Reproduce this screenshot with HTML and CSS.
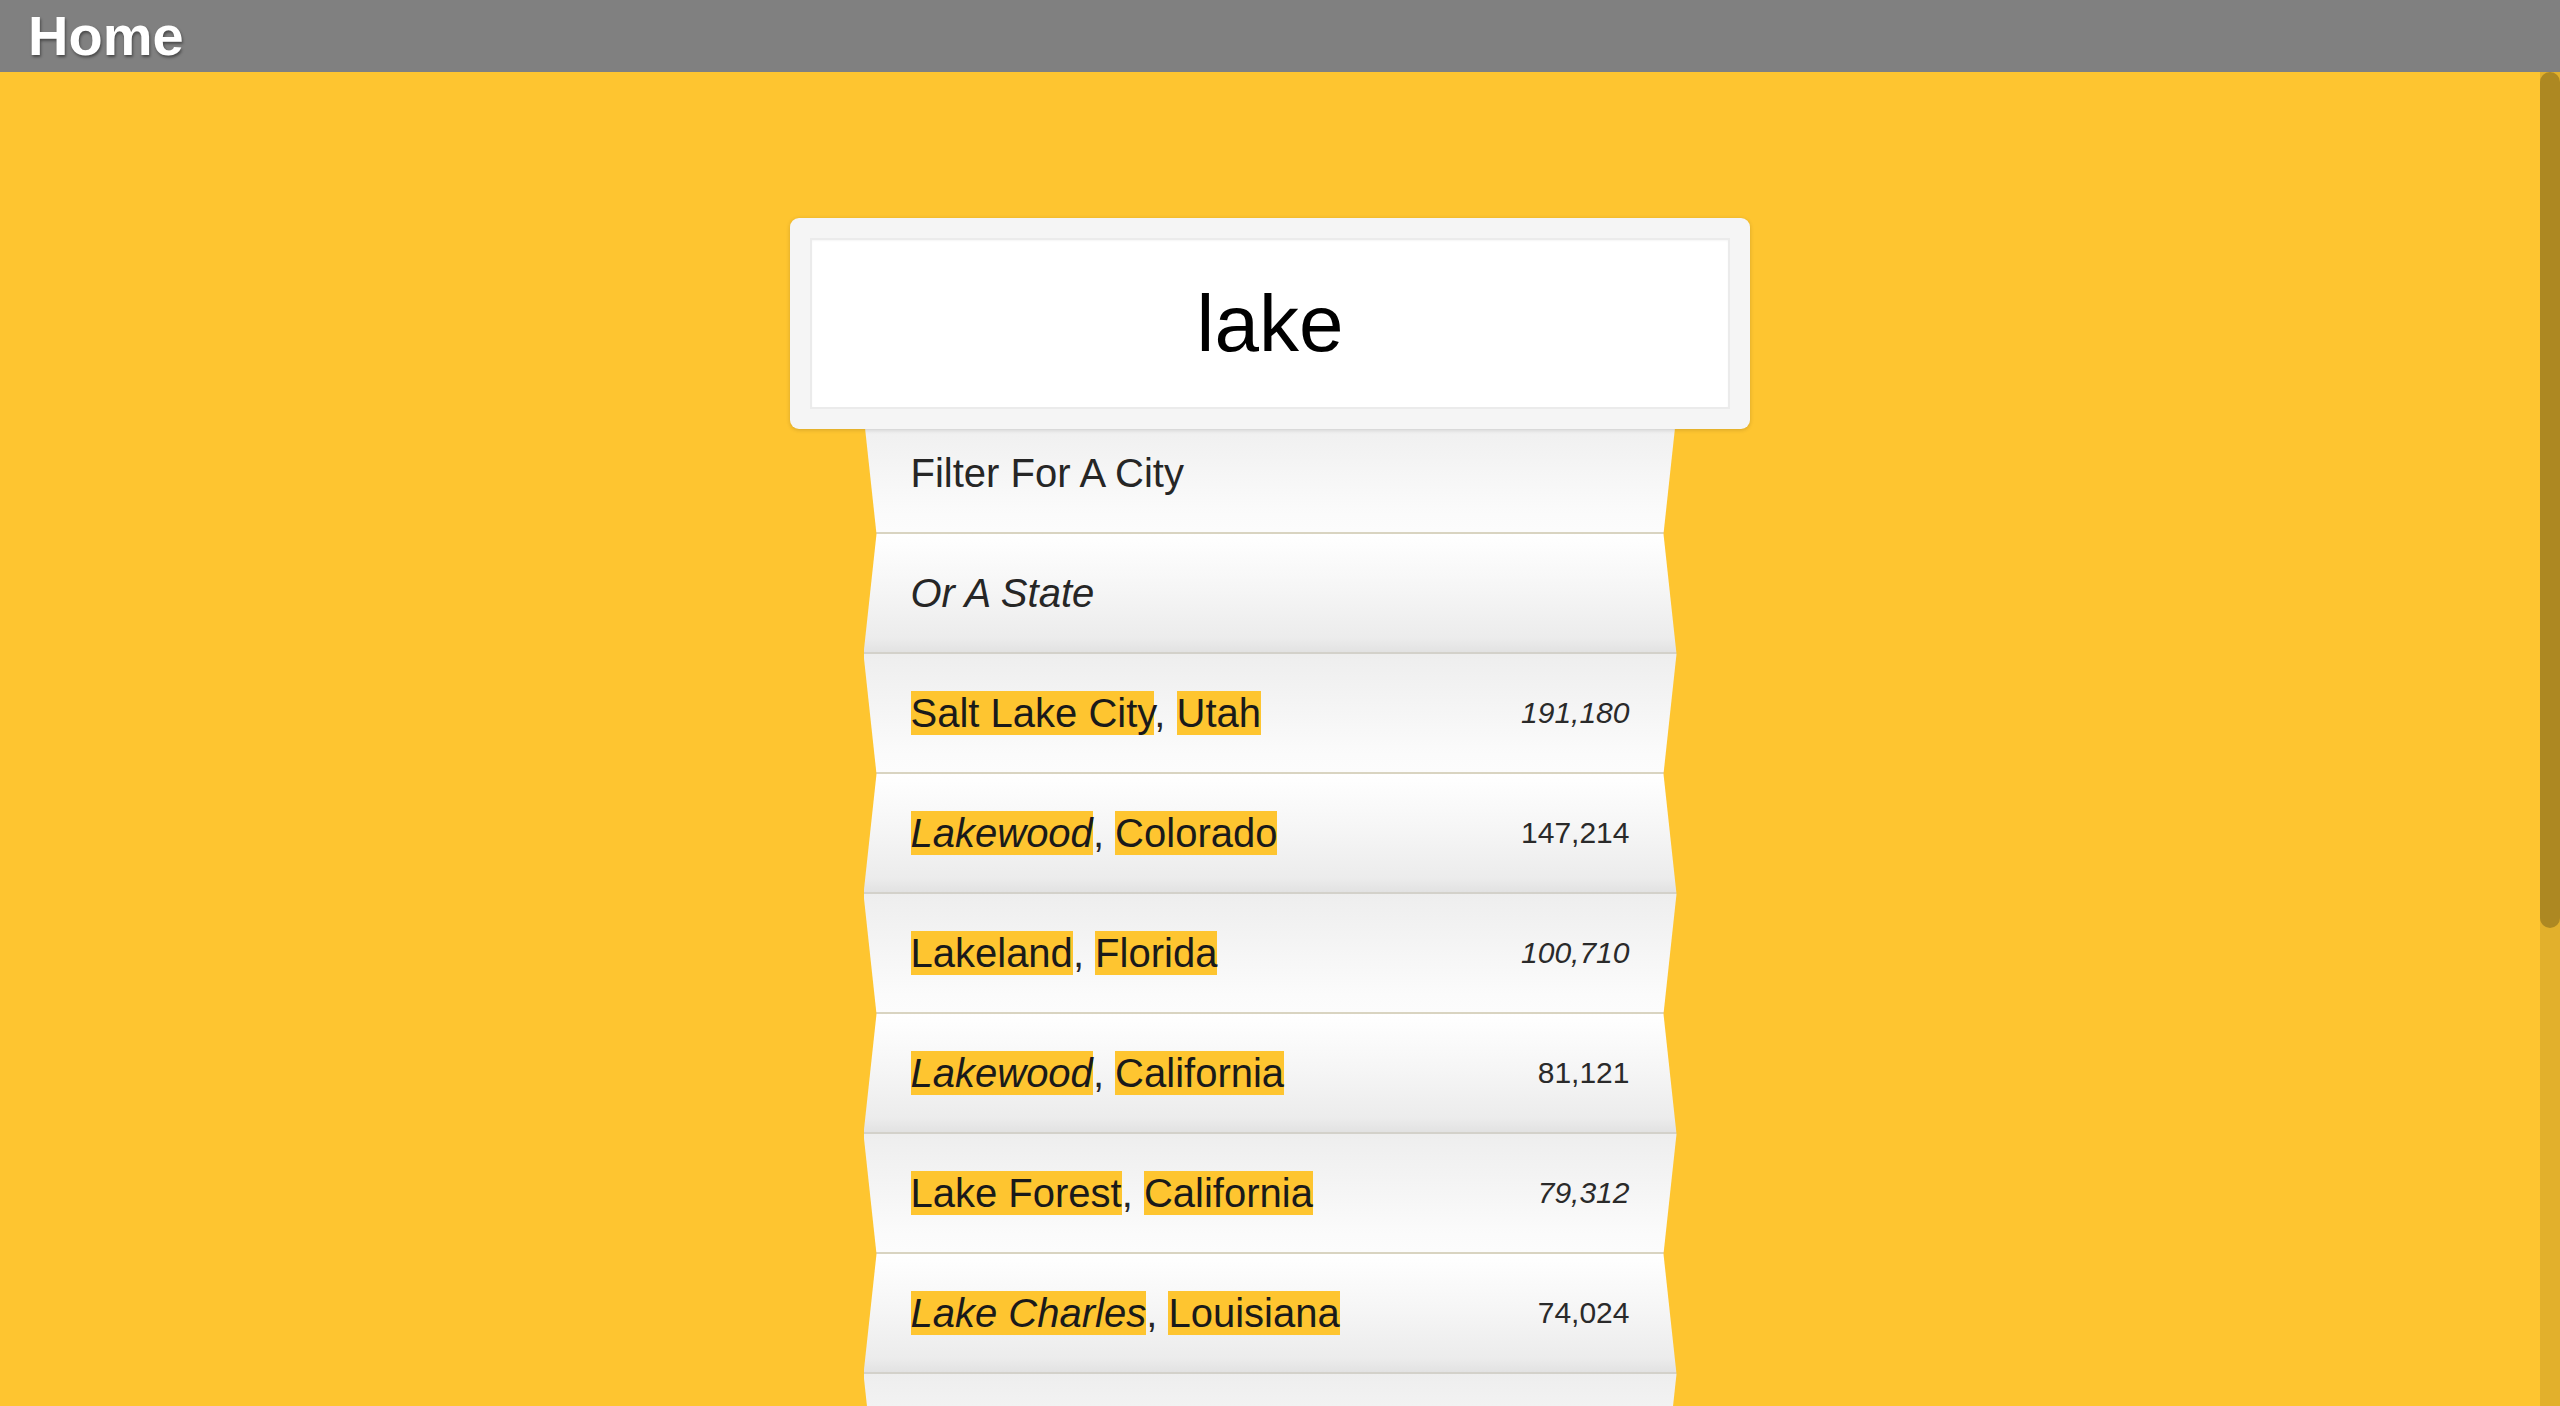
FILE: index.html
```html
<!DOCTYPE html>
<html lang="en">
<head>
<meta charset="utf-8">
<title>Home</title>
<link rel="stylesheet" href="styles.css">
</head>
<body>
<header class="topbar"><h1 class="title">Home</h1></header>
<div class="viewport">
  <main class="scroller">
    <div class="stage">
      <div class="search-panel">
        <input class="search-input" type="text" value="lake">
      </div>
      <ul class="fold-list">
        <li class="row odd"><span class="name">Filter For A City</span></li>
        <li class="row even"><span class="name"><em>Or A State</em></span></li>
        <li class="row odd"><span class="name"><span class="hl">Salt Lake City</span>, <span class="hl">Utah</span></span><span class="pop"><em>191,180</em></span></li>
        <li class="row even"><span class="name"><span class="hl"><em>Lakewood</em></span>, <span class="hl">Colorado</span></span><span class="pop">147,214</span></li>
        <li class="row odd"><span class="name"><span class="hl">Lakeland</span>, <span class="hl">Florida</span></span><span class="pop"><em>100,710</em></span></li>
        <li class="row even"><span class="name"><span class="hl"><em>Lakewood</em></span>, <span class="hl">California</span></span><span class="pop">81,121</span></li>
        <li class="row odd"><span class="name"><span class="hl">Lake Forest</span>, <span class="hl">California</span></span><span class="pop"><em>79,312</em></span></li>
        <li class="row even"><span class="name"><span class="hl"><em>Lake Charles</em></span>, <span class="hl">Louisiana</span></span><span class="pop">74,024</span></li>
        <li class="row odd"></li>
      </ul>
    </div>
  </main>
  <div class="scroll-track" aria-hidden="true"><div class="scroll-thumb"></div></div>
</div>
</body>
</html>
```
FILE: styles.css
```css
html, body {
  margin: 0;
  padding: 0;
  height: 100%;
}

body {
  display: flex;
  flex-direction: column;
  background: #fec530;
  font-family: "Liberation Sans", Arial, sans-serif;
  overflow: hidden;
}

.topbar {
  flex: 0 0 72px;
  height: 72px;
  background: #808080;
  padding-left: 28px;
  box-sizing: border-box;
}

.title {
  margin: 0;
  font-size: 56px;
  line-height: 72px;
  font-weight: bold;
  color: #ffffff;
  text-shadow: 1px 2px 3px rgba(0, 0, 0, 0.45);
}

.viewport {
  flex: 1 1 auto;
  min-height: 0;
  display: flex;
  flex-direction: row;
}

.scroller {
  flex: 1 1 auto;
  min-width: 0;
  overflow: hidden;
}

.scroll-track {
  flex: 0 0 20px;
  width: 20px;
  background: #e2b02c;
}

.scroll-thumb {
  height: 856px;
  background: #ad8822;
  border-radius: 10px;
}

.stage {
  display: flex;
  flex-direction: column;
  align-items: center;
  padding-top: 146px;
}

.search-panel {
  position: relative;
  z-index: 2;
  width: 960px;
  height: 211px;
  box-sizing: border-box;
  padding: 20px;
  background: #f5f5f5;
  border-radius: 9px;
  box-shadow: 0 1px 4px rgba(0, 0, 0, 0.16);
}

.search-input {
  display: block;
  width: 100%;
  height: 171px;
  box-sizing: border-box;
  margin: 0;
  border: 2px solid #ebebeb;
  background: #ffffff;
  box-shadow: inset 0 1px 2px rgba(0, 0, 0, 0.04);
  font-family: "Liberation Sans", Arial, sans-serif;
  font-size: 80px;
  color: #000000;
  text-align: center;
  outline: none;
  padding: 0;
}

.fold-list {
  list-style: none;
  margin: -15px 0 0 0;
  padding: 0;
  width: 813px;
  display: flex;
  flex-direction: column;
}

.row {
  height: 120px;
  box-sizing: border-box;
  display: flex;
  align-items: center;
  justify-content: space-between;
  padding: 0 47px;
  font-size: 40px;
  color: #262626;
}

.row.odd {
  clip-path: polygon(0 0, 100% 0, calc(100% - 13px) 100%, 13px 100%);
  background: linear-gradient(to bottom, #eeeeee 0%, #f4f4f4 40%, #fbfbfb 85%, #fcfcfc 100%);
  border-bottom: 2px solid #d9d4c1;
}

.row.even {
  clip-path: polygon(13px 0, calc(100% - 13px) 0, 100% 100%, 0 100%);
  background: linear-gradient(to bottom, #ffffff 0%, #f6f6f6 45%, #ececec 88%, #e2e2e2 100%);
  border-bottom: 2px solid #d3d1ca;
}

.name {
  white-space: nowrap;
  color: #262626;
}

.name em,
.pop em {
  font-style: italic;
}

.hl {
  background: #fec530;
  color: #1a1a1a;
}

.pop {
  font-size: 30px;
  color: #2a2a2a;
  white-space: nowrap;
}
```
